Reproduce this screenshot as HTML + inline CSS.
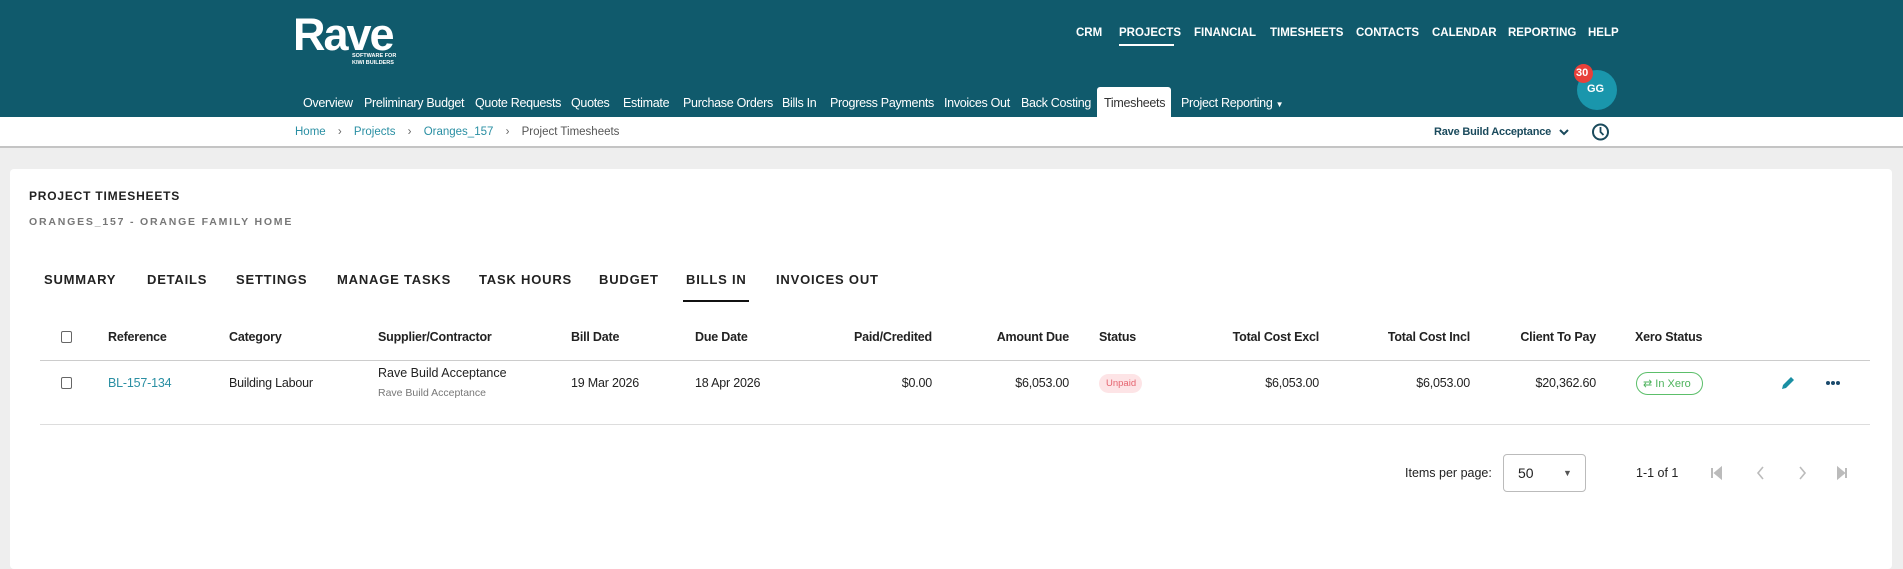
<!DOCTYPE html>
<html><head><meta charset="utf-8"><style>
*{box-sizing:border-box;margin:0;padding:0}
body{width:1903px;height:536px;overflow:hidden;background:#eeeeee;font-family:"Liberation Sans",sans-serif;position:relative;color:#222}
.a{position:absolute;white-space:nowrap}
#hdr{position:absolute;left:0;top:0;width:1903px;height:117px;background:#105a6c}
#bc{position:absolute;left:0;top:117px;width:1903px;height:31px;background:#fff;border-bottom:2px solid #c4c4c4}
.tn{font-size:11.5px;font-weight:bold;color:#fff;top:27px}
.sn{font-size:12.5px;color:#fff;top:96px;letter-spacing:-0.3px}
#card{position:absolute;left:10px;top:169px;width:1882px;height:400px;background:#fff;border-radius:4px}
.tab{font-size:13px;font-weight:bold;letter-spacing:0.8px;top:272px;color:#222}
.th{font-size:12.5px;font-weight:bold;top:330px;letter-spacing:-0.2px}
.td{font-size:12.5px;top:376px;letter-spacing:-0.2px}
.r{text-align:right}
.cb{width:11px;height:12px;border:1.5px solid #666;border-radius:2px}
</style></head><body>
<div id="hdr"></div>
<div class="a" style="left:293px;top:9px;font-size:45px;font-weight:bold;color:#fff;letter-spacing:-2px">Rave</div>
<div class="a" style="left:352px;top:53px;font-size:5.5px;font-weight:bold;color:#fff;line-height:6.5px">SOFTWARE FOR<br>KIWI BUILDERS</div>
<div class="a tn" style="left:1076px">CRM</div>
<div class="a tn" style="left:1119px">PROJECTS</div>
<div style="position:absolute;left:1119px;top:44px;width:55px;height:2px;background:#fff"></div>
<div class="a tn" style="left:1194px">FINANCIAL</div>
<div class="a tn" style="left:1270px">TIMESHEETS</div>
<div class="a tn" style="left:1356px">CONTACTS</div>
<div class="a tn" style="left:1432px">CALENDAR</div>
<div class="a tn" style="left:1508px">REPORTING</div>
<div class="a tn" style="left:1588px">HELP</div>
<div class="a sn" style="left:303px">Overview</div>
<div class="a sn" style="left:364px">Preliminary Budget</div>
<div class="a sn" style="left:475px">Quote Requests</div>
<div class="a sn" style="left:571px">Quotes</div>
<div class="a sn" style="left:623px">Estimate</div>
<div class="a sn" style="left:683px">Purchase Orders</div>
<div class="a sn" style="left:782px">Bills In</div>
<div class="a sn" style="left:830px">Progress Payments</div>
<div class="a sn" style="left:944px">Invoices Out</div>
<div class="a sn" style="left:1021px">Back Costing</div>
<div style="position:absolute;left:1097px;top:87px;width:74px;height:31px;background:#fff;border-radius:3px 3px 0 0"></div>
<div class="a sn" style="left:1104px;color:#333">Timesheets</div>
<div class="a sn" style="left:1181px">Project Reporting <span style="font-size:8px">▼</span></div>
<div style="position:absolute;left:1577px;top:70px;width:40px;height:40px;border-radius:50%;background:#1a96ac"></div>
<div class="a" style="left:1587px;top:83px;font-size:11px;font-weight:bold;color:#fff">GG</div>
<div style="position:absolute;left:1574px;top:64px;width:19px;height:19px;border-radius:50%;background:#e8403a"></div>
<div class="a" style="left:1576px;top:67px;font-size:11px;color:#fff;font-weight:bold">30</div>
<div id="bc"></div>
<div class="a" style="left:295px;top:126px;font-size:11.5px;color:#2a8fa3">Home <span style="color:#666;margin:0 9px">›</span> Projects <span style="color:#666;margin:0 9px">›</span> Oranges_157 <span style="color:#666;margin:0 9px">›</span> <span style="color:#555">Project Timesheets</span></div>
<div class="a" style="left:1434px;top:126px;font-size:11px;font-weight:bold;color:#1a4a5c;letter-spacing:-0.2px">Rave Build Acceptance</div>
<svg class="a" style="left:1558px;top:128px" width="12" height="9" viewBox="0 0 12 9"><path d="M2 2l4 4 4-4" stroke="#1a4a5c" stroke-width="2" fill="none"/></svg>
<svg class="a" style="left:1591px;top:122px" width="19" height="20" viewBox="0 0 19 20"><circle cx="9.5" cy="10" r="7.5" stroke="#1a4a5c" stroke-width="2" fill="none"/><path d="M9.5 5v5l3 3" stroke="#1a4a5c" stroke-width="1.8" fill="none"/></svg>
<div id="card"></div>
<div class="a" style="left:29px;top:189px;font-size:12px;font-weight:bold;letter-spacing:0.8px">PROJECT TIMESHEETS</div>
<div class="a" style="left:29px;top:216px;font-size:10.5px;font-weight:bold;letter-spacing:1.8px;color:#777">ORANGES_157 - ORANGE FAMILY HOME</div>
<div class="a tab" style="left:44px">SUMMARY</div>
<div class="a tab" style="left:147px">DETAILS</div>
<div class="a tab" style="left:236px">SETTINGS</div>
<div class="a tab" style="left:337px">MANAGE TASKS</div>
<div class="a tab" style="left:479px">TASK HOURS</div>
<div class="a tab" style="left:599px">BUDGET</div>
<div class="a tab" style="left:686px">BILLS IN</div>
<div class="a tab" style="left:776px">INVOICES OUT</div>
<div style="position:absolute;left:683px;top:300px;width:66px;height:2px;background:#111"></div>
<div class="a cb" style="left:61px;top:331px"></div>
<div class="a th" style="left:108px">Reference</div>
<div class="a th" style="left:229px">Category</div>
<div class="a th" style="left:378px">Supplier/Contractor</div>
<div class="a th" style="left:571px">Bill Date</div>
<div class="a th" style="left:695px">Due Date</div>
<div class="a th r" style="right:971px">Paid/Credited</div>
<div class="a th r" style="right:834px">Amount Due</div>
<div class="a th" style="left:1099px">Status</div>
<div class="a th r" style="right:584px">Total Cost Excl</div>
<div class="a th r" style="right:433px">Total Cost Incl</div>
<div class="a th r" style="right:307px">Client To Pay</div>
<div class="a th" style="left:1635px">Xero Status</div>
<div style="position:absolute;left:40px;top:360px;width:1830px;height:1px;background:#ccc"></div>
<div class="a cb" style="left:61px;top:377px"></div>
<div class="a td" style="left:108px;color:#2a8fa3">BL-157-134</div>
<div class="a td" style="left:229px">Building Labour</div>
<div class="a" style="left:378px;top:366px;font-size:12.5px">Rave Build Acceptance</div>
<div class="a" style="left:378px;top:387px;font-size:10.5px;color:#777">Rave Build Acceptance</div>
<div class="a td" style="left:571px">19 Mar 2026</div>
<div class="a td" style="left:695px">18 Apr 2026</div>
<div class="a td r" style="right:971px">$0.00</div>
<div class="a td r" style="right:834px">$6,053.00</div>
<div style="position:absolute;left:1099px;top:374px;width:43px;height:19px;border-radius:10px;background:#fde4e6"></div>
<div class="a" style="left:1106px;top:378px;font-size:9.5px;color:#e5646f">Unpaid</div>
<div class="a td r" style="right:584px">$6,053.00</div>
<div class="a td r" style="right:433px">$6,053.00</div>
<div class="a td r" style="right:307px">$20,362.60</div>
<div style="position:absolute;left:1636px;top:372px;width:67px;height:23px;border-radius:12px;border:1.5px solid #5cbf6a"></div>
<div class="a" style="left:1643px;top:377px;font-size:11px;color:#4db35c">⇄ In Xero</div>
<svg class="a" style="left:1780px;top:375px" width="16" height="16" viewBox="0 0 16 16"><path d="M2 14l1-4 8-8 3 3-8 8z" fill="#1a8fa3"/></svg>
<svg class="a" style="left:1825px;top:380px" width="16" height="6" viewBox="0 0 16 6"><circle cx="3" cy="3" r="2" fill="#1a4a6c"/><circle cx="8" cy="3" r="2" fill="#1a4a6c"/><circle cx="13" cy="3" r="2" fill="#1a4a6c"/></svg>
<div style="position:absolute;left:40px;top:424px;width:1830px;height:1px;background:#ddd"></div>
<div class="a" style="left:1405px;top:466px;font-size:12.5px">Items per page:</div>
<div style="position:absolute;left:1503px;top:454px;width:83px;height:38px;border:1px solid #bbb;border-radius:4px"></div>
<div class="a" style="left:1518px;top:465px;font-size:14px">50</div>
<div class="a" style="left:1563px;top:468px;font-size:9px;color:#555">▼</div>
<div class="a" style="left:1636px;top:466px;font-size:12.5px">1-1 of 1</div>
<svg class="a" style="left:1708px;top:464px" width="150" height="18" viewBox="0 0 150 18"><path d="M4 4v10M13 4l-6 5 6 5z" stroke="#bbb" stroke-width="2" fill="#bbb"/><path d="M55 3l-5 6 5 6" stroke="#bbb" stroke-width="1.6" fill="none"/><path d="M92 3l5 6-5 6" stroke="#bbb" stroke-width="1.6" fill="none"/><path d="M138 4v10M130 4l6 5-6 5z" stroke="#bbb" stroke-width="2" fill="#bbb"/></svg>
</body></html>
